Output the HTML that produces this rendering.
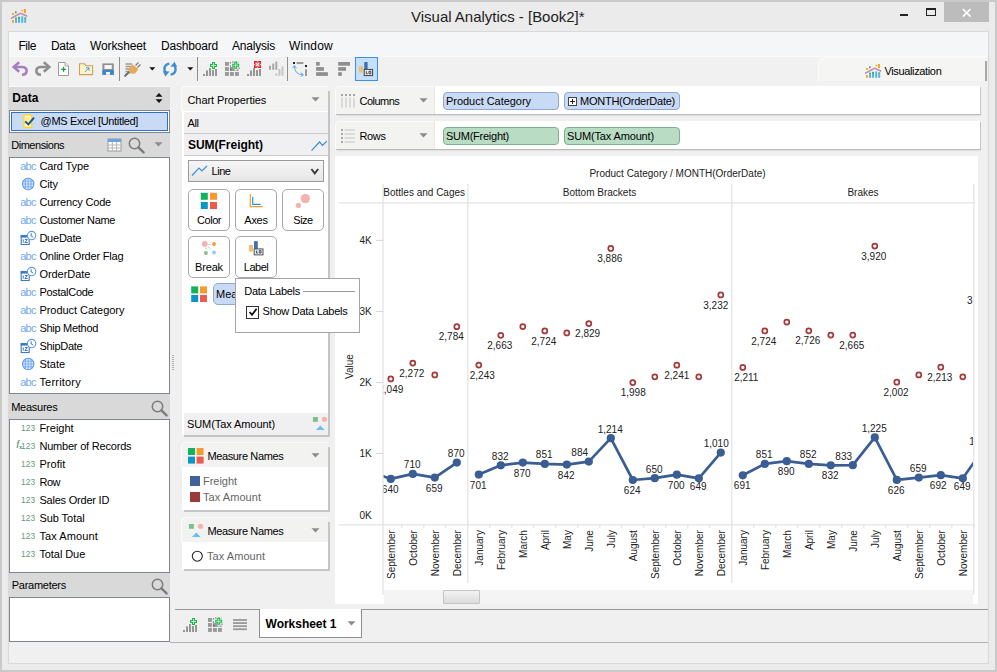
<!DOCTYPE html>
<html><head><meta charset="utf-8"><title>Visual Analytics - [Book2]*</title>
<style>
html,body{margin:0;padding:0;}
body{width:997px;height:672px;overflow:hidden;position:relative;background:#ebebeb;font-family:"Liberation Sans",sans-serif;}
#w{position:absolute;left:0;top:0;width:997px;height:672px;overflow:hidden;}
#w div,#w span.t,#w svg{position:absolute;box-sizing:border-box;}
span.t{white-space:pre;}
</style></head><body><div id="w">
<div style="left:0px;top:0px;width:997px;height:672px;background:#ebebeb;border:2px solid #c9c9c9;"></div>
<span class="t" style="left:411.05px;top:9.30px;font-size:15px;line-height:15px;color:#222;letter-spacing:-0.018px;">Visual Analytics - [Book2]*</span>
<div style="left:900px;top:14px;width:8px;height:2px;background:#222;"></div>
<div style="left:926px;top:8px;width:10px;height:8px;border:1px solid #222;border-top:2px solid #222;"></div>
<div style="left:944px;top:2px;width:45px;height:20px;background:#bcbcbc;"></div>
<svg style="left:959px;top:5px;" width="16" height="14" viewBox="0 0 16 14"><path d="M3.9 4 L11.5 11.6 M11.5 4 L3.9 11.6" stroke="#fff" stroke-width="1.6" fill="none"/></svg>
<div style="left:8px;top:31px;width:981px;height:633px;background:#f0f0f0;border:1px solid #d9d9d9;"></div>
<div style="left:9px;top:32px;width:979px;height:24px;background:#f5f6f7;"></div>
<span class="t" style="left:18.40px;top:39.84px;font-size:12px;line-height:12px;color:#000;letter-spacing:-0.434px;">File</span>
<span class="t" style="left:51.00px;top:39.84px;font-size:12px;line-height:12px;color:#000;letter-spacing:-0.337px;">Data</span>
<span class="t" style="left:90.00px;top:39.84px;font-size:12px;line-height:12px;color:#000;letter-spacing:-0.126px;">Worksheet</span>
<span class="t" style="left:161.00px;top:39.84px;font-size:12px;line-height:12px;color:#000;letter-spacing:-0.189px;">Dashboard</span>
<span class="t" style="left:232.00px;top:39.84px;font-size:12px;line-height:12px;color:#000;letter-spacing:-0.210px;">Analysis</span>
<span class="t" style="left:289.00px;top:39.84px;font-size:12px;line-height:12px;color:#000;letter-spacing:0.220px;">Window</span>
<div style="left:9px;top:56px;width:979px;height:30px;background:#f1f1f1;border-top:1px solid #fbfbfb;"></div>
<div style="left:9px;top:86px;width:161px;height:1px;background:#fbfbfb;"></div>
<div style="left:9px;top:87px;width:161px;height:23px;background:#d9d9d9;"></div>
<span class="t" style="left:12.30px;top:92.34px;font-size:12px;line-height:12px;color:#000;font-weight:bold;">Data</span>
<svg style="left:154px;top:92px;" width="10" height="12" viewBox="0 0 10 12"><path d="M1.5 4.8 L5 1 L8.5 4.8 Z M1.5 7.2 L5 11 L8.5 7.2 Z" fill="#111"/></svg>
<div style="left:9px;top:110px;width:161px;height:23px;background:#c9daf5;border:1px solid #7f8690;box-shadow:inset 0 0 0 1px #fff, inset 0 0 0 2px #2f6fd0;"></div>
<svg style="left:22px;top:113px;" width="14" height="16" viewBox="0 0 14 16"><rect x="1.8" y="1.6" width="8" height="13" rx="1.4" fill="#fdee9a" stroke="#fbd535" stroke-width="1.3"/><path d="M3.4 3.6 H8.2 M3.4 12.6 H8.2" stroke="#fffbe0" stroke-width="1"/><path d="M3.2 8.4 L6.4 11.4 L12 4.6" stroke="#1f4e8f" stroke-width="1.9" fill="none"/></svg>
<span class="t" style="left:40.60px;top:115.69px;font-size:11px;line-height:11px;color:#000;letter-spacing:-0.329px;">@MS Excel [Untitled]</span>
<div style="left:9px;top:133px;width:161px;height:24px;background:#d9d9d9;"></div>
<span class="t" style="left:11.20px;top:139.99px;font-size:11px;line-height:11px;color:#000;letter-spacing:-0.456px;">Dimensions</span>
<svg style="left:107px;top:138px;" width="15" height="14" viewBox="0 0 15 14"><rect x="1" y="1" width="13" height="12" fill="#fff" stroke="#9a9a9a"/><rect x="1" y="1" width="13" height="3" fill="#6fa3df"/><path d="M1 7 H14 M1 10 H14 M5.3 4 V13 M9.6 4 V13" stroke="#b5b5b5" stroke-width="1"/></svg>
<svg style="left:127px;top:136px;" width="20" height="20" viewBox="0 0 20 20"><circle cx="7.5" cy="7.5" r="5.2" fill="none" stroke="#7c7c7c" stroke-width="1.5"/><path d="M11.4 11.4 L16.6 16.4" stroke="#7c7c7c" stroke-width="2.4" stroke-linecap="round"/></svg>
<svg style="left:154px;top:142px;" width="9" height="5" viewBox="0 0 9 5"><path d="M0.5 0.3 H8.5 L4.5 4.6 Z" fill="#8c8c8c"/></svg>
<div style="left:9px;top:157px;width:161px;height:237px;background:#fff;border:1px solid #7f8690;"></div>
<span class="t" style="left:20.20px;top:160.59px;font-size:11px;line-height:11px;color:#6fa7ee;letter-spacing:-0.745px;">abc</span>
<span class="t" style="left:39.40px;top:161.09px;font-size:11px;line-height:11px;color:#000;letter-spacing:-0.105px;">Card Type</span>
<svg style="left:20.6px;top:176.6px;" width="14" height="14" viewBox="0 0 14 14"><circle cx="7.2" cy="7" r="5.7" fill="#e4eefc" stroke="#5b9bf0" stroke-width="1.1"/><path d="M7.2 1.3 V12.7 M4.4 2.2 V11.8 M10 2.2 V11.8 M1.5 7 H12.9 M2.4 4.2 H12 M2.4 9.8 H12" stroke="#5b9bf0" stroke-width="0.75" fill="none"/></svg>
<span class="t" style="left:39.40px;top:179.09px;font-size:11px;line-height:11px;color:#000;letter-spacing:-0.136px;">City</span>
<span class="t" style="left:20.20px;top:196.59px;font-size:11px;line-height:11px;color:#6fa7ee;letter-spacing:-0.745px;">abc</span>
<span class="t" style="left:39.40px;top:197.09px;font-size:11px;line-height:11px;color:#000;letter-spacing:-0.182px;">Currency Code</span>
<span class="t" style="left:20.20px;top:214.59px;font-size:11px;line-height:11px;color:#6fa7ee;letter-spacing:-0.745px;">abc</span>
<span class="t" style="left:39.40px;top:215.09px;font-size:11px;line-height:11px;color:#000;letter-spacing:-0.344px;">Customer Name</span>
<svg style="left:19.5px;top:230.0px;" width="17" height="16" viewBox="0 0 17 16"><rect x="1.2" y="5.5" width="8" height="9" fill="#fff" stroke="#3f79c9" stroke-width="1.1"/><rect x="0.7" y="5" width="9" height="2.6" fill="#3f79c9"/><path d="M3.2 9.4 V12.6 M4.9 9.5 H7.4 L4.9 12.5 H7.6" stroke="#3f79c9" stroke-width="1" fill="none"/><circle cx="11.6" cy="5.6" r="4.2" fill="#fff" stroke="#5b9bf0" stroke-width="1.1"/><path d="M11.2 3.2 V6 L13.2 7.2" stroke="#3f79c9" stroke-width="1" fill="none"/></svg>
<span class="t" style="left:39.40px;top:233.09px;font-size:11px;line-height:11px;color:#000;letter-spacing:-0.230px;">DueDate</span>
<span class="t" style="left:20.20px;top:250.59px;font-size:11px;line-height:11px;color:#6fa7ee;letter-spacing:-0.745px;">abc</span>
<span class="t" style="left:39.40px;top:251.09px;font-size:11px;line-height:11px;color:#000;letter-spacing:-0.207px;">Online Order Flag</span>
<svg style="left:19.5px;top:266.0px;" width="17" height="16" viewBox="0 0 17 16"><rect x="1.2" y="5.5" width="8" height="9" fill="#fff" stroke="#3f79c9" stroke-width="1.1"/><rect x="0.7" y="5" width="9" height="2.6" fill="#3f79c9"/><path d="M3.2 9.4 V12.6 M4.9 9.5 H7.4 L4.9 12.5 H7.6" stroke="#3f79c9" stroke-width="1" fill="none"/><circle cx="11.6" cy="5.6" r="4.2" fill="#fff" stroke="#5b9bf0" stroke-width="1.1"/><path d="M11.2 3.2 V6 L13.2 7.2" stroke="#3f79c9" stroke-width="1" fill="none"/></svg>
<span class="t" style="left:39.40px;top:269.09px;font-size:11px;line-height:11px;color:#000;letter-spacing:-0.039px;">OrderDate</span>
<span class="t" style="left:20.20px;top:286.59px;font-size:11px;line-height:11px;color:#6fa7ee;letter-spacing:-0.745px;">abc</span>
<span class="t" style="left:39.40px;top:287.09px;font-size:11px;line-height:11px;color:#000;letter-spacing:-0.287px;">PostalCode</span>
<span class="t" style="left:20.20px;top:304.59px;font-size:11px;line-height:11px;color:#6fa7ee;letter-spacing:-0.745px;">abc</span>
<span class="t" style="left:39.40px;top:305.09px;font-size:11px;line-height:11px;color:#000;letter-spacing:-0.037px;">Product Category</span>
<span class="t" style="left:20.20px;top:322.59px;font-size:11px;line-height:11px;color:#6fa7ee;letter-spacing:-0.745px;">abc</span>
<span class="t" style="left:39.40px;top:323.09px;font-size:11px;line-height:11px;color:#000;letter-spacing:-0.278px;">Ship Method</span>
<svg style="left:19.5px;top:338.0px;" width="17" height="16" viewBox="0 0 17 16"><rect x="1.2" y="5.5" width="8" height="9" fill="#fff" stroke="#3f79c9" stroke-width="1.1"/><rect x="0.7" y="5" width="9" height="2.6" fill="#3f79c9"/><path d="M3.2 9.4 V12.6 M4.9 9.5 H7.4 L4.9 12.5 H7.6" stroke="#3f79c9" stroke-width="1" fill="none"/><circle cx="11.6" cy="5.6" r="4.2" fill="#fff" stroke="#5b9bf0" stroke-width="1.1"/><path d="M11.2 3.2 V6 L13.2 7.2" stroke="#3f79c9" stroke-width="1" fill="none"/></svg>
<span class="t" style="left:39.40px;top:341.09px;font-size:11px;line-height:11px;color:#000;letter-spacing:-0.281px;">ShipDate</span>
<svg style="left:20.6px;top:356.59999999999997px;" width="14" height="14" viewBox="0 0 14 14"><circle cx="7.2" cy="7" r="5.7" fill="#e4eefc" stroke="#5b9bf0" stroke-width="1.1"/><path d="M7.2 1.3 V12.7 M4.4 2.2 V11.8 M10 2.2 V11.8 M1.5 7 H12.9 M2.4 4.2 H12 M2.4 9.8 H12" stroke="#5b9bf0" stroke-width="0.75" fill="none"/></svg>
<span class="t" style="left:39.40px;top:359.09px;font-size:11px;line-height:11px;color:#000;letter-spacing:0.023px;">State</span>
<span class="t" style="left:20.20px;top:376.59px;font-size:11px;line-height:11px;color:#6fa7ee;letter-spacing:-0.745px;">abc</span>
<span class="t" style="left:39.40px;top:377.09px;font-size:11px;line-height:11px;color:#000;letter-spacing:0.198px;">Territory</span>
<div style="left:9px;top:394px;width:161px;height:25px;background:#d9d9d9;"></div>
<span class="t" style="left:11.20px;top:401.99px;font-size:11px;line-height:11px;color:#000;letter-spacing:-0.262px;">Measures</span>
<svg style="left:149.5px;top:399px;" width="20" height="20" viewBox="0 0 20 20"><circle cx="7.5" cy="7.5" r="5.2" fill="none" stroke="#7c7c7c" stroke-width="1.5"/><path d="M11.4 11.4 L16.6 16.4" stroke="#7c7c7c" stroke-width="2.4" stroke-linecap="round"/></svg>
<div style="left:9px;top:419px;width:161px;height:154px;background:#fff;border:1px solid #7f8690;"></div>
<span class="t" style="left:21.10px;top:424.17px;font-size:8.3px;line-height:8.3px;color:#5f9a7e;letter-spacing:0.051px;">123</span>
<span class="t" style="left:39.40px;top:423.09px;font-size:11px;line-height:11px;color:#000;">Freight</span>
<span class="t" style="left:21.10px;top:442.17px;font-size:8.3px;line-height:8.3px;color:#5f9a7e;letter-spacing:0.051px;">123</span>
<span class="t" style="left:39.40px;top:441.09px;font-size:11px;line-height:11px;color:#000;letter-spacing:-0.198px;">Number of Records</span>
<span class="t" style="left:21.10px;top:460.17px;font-size:8.3px;line-height:8.3px;color:#5f9a7e;letter-spacing:0.051px;">123</span>
<span class="t" style="left:39.40px;top:459.09px;font-size:11px;line-height:11px;color:#000;letter-spacing:0.071px;">Profit</span>
<span class="t" style="left:21.10px;top:478.17px;font-size:8.3px;line-height:8.3px;color:#5f9a7e;letter-spacing:0.051px;">123</span>
<span class="t" style="left:39.40px;top:477.09px;font-size:11px;line-height:11px;color:#000;letter-spacing:-0.435px;">Row</span>
<span class="t" style="left:21.10px;top:496.17px;font-size:8.3px;line-height:8.3px;color:#5f9a7e;letter-spacing:0.051px;">123</span>
<span class="t" style="left:39.40px;top:495.09px;font-size:11px;line-height:11px;color:#000;letter-spacing:-0.210px;">Sales Order ID</span>
<span class="t" style="left:21.10px;top:514.17px;font-size:8.3px;line-height:8.3px;color:#5f9a7e;letter-spacing:0.051px;">123</span>
<span class="t" style="left:39.40px;top:513.09px;font-size:11px;line-height:11px;color:#000;letter-spacing:-0.051px;">Sub Total</span>
<span class="t" style="left:21.10px;top:532.17px;font-size:8.3px;line-height:8.3px;color:#5f9a7e;letter-spacing:0.051px;">123</span>
<span class="t" style="left:39.40px;top:531.09px;font-size:11px;line-height:11px;color:#000;letter-spacing:0.093px;">Tax Amount</span>
<span class="t" style="left:21.10px;top:550.17px;font-size:8.3px;line-height:8.3px;color:#5f9a7e;letter-spacing:0.051px;">123</span>
<span class="t" style="left:39.40px;top:549.09px;font-size:11px;line-height:11px;color:#000;letter-spacing:-0.074px;">Total Due</span>
<span class="t" style="left:16.50px;top:439.35px;font-size:8.8px;line-height:8.8px;color:#5f9a7e;font-style:italic;font-weight:bold;font-family:'Liberation Serif',serif;">f</span>
<span class="t" style="left:19.00px;top:443.52px;font-size:6px;line-height:6px;color:#5f9a7e;font-weight:bold;">x</span>
<div style="left:9px;top:573px;width:161px;height:24px;background:#d9d9d9;"></div>
<span class="t" style="left:11.70px;top:579.99px;font-size:11px;line-height:11px;color:#000;letter-spacing:-0.255px;">Parameters</span>
<svg style="left:149.5px;top:577px;" width="20" height="20" viewBox="0 0 20 20"><circle cx="7.5" cy="7.5" r="5.2" fill="none" stroke="#7c7c7c" stroke-width="1.5"/><path d="M11.4 11.4 L16.6 16.4" stroke="#7c7c7c" stroke-width="2.4" stroke-linecap="round"/></svg>
<div style="left:9px;top:597px;width:161px;height:45px;background:#fff;border:1px solid #7f8690;"></div>
<div style="left:328px;top:91px;width:2px;height:346px;background:#c4c4c4;"></div>
<div style="left:182px;top:111px;width:146px;height:324px;background:#fff;"></div>
<div style="left:181px;top:86px;width:147px;height:25px;background:#f3f3f1;border-radius:5px 0 0 0;border-top:1px solid #fcfcfc;border-left:1px solid #fcfcfc;"></div>
<span class="t" style="left:187.50px;top:95.09px;font-size:11px;line-height:11px;color:#000;letter-spacing:-0.086px;">Chart Properties</span>
<svg style="left:311px;top:97px;" width="9" height="5" viewBox="0 0 9 5"><path d="M0.5 0.3 H8.5 L4.5 4.6 Z" fill="#8c8c8c"/></svg>
<div style="left:184px;top:112px;width:144px;height:22px;background:#f0f0f3;border-bottom:1px solid #cccccc;"></div>
<span class="t" style="left:187.60px;top:118.29px;font-size:11px;line-height:11px;color:#000;letter-spacing:-0.408px;">All</span>
<div style="left:184px;top:134px;width:144px;height:22px;background:#f0f0f3;border-bottom:1px solid #cccccc;"></div>
<span class="t" style="left:188.00px;top:139.14px;font-size:12px;line-height:12px;color:#000;font-weight:bold;letter-spacing:-0.027px;">SUM(Freight)</span>
<svg style="left:310px;top:137px;" width="18" height="16" viewBox="0 0 18 16"><path d="M1.5 13.6 L9.5 5 L12.5 8.4 L16.8 4.2" stroke="#3d8fd8" stroke-width="1.2" fill="none"/></svg>
<div style="left:188px;top:160px;width:136px;height:22px;border:1px solid #9a9a9a;background:linear-gradient(#f6f6f6,#e6e6e6);"></div>
<svg style="left:190px;top:162px;" width="20" height="18" viewBox="0 0 20 18"><path d="M2 13.5 L9 6 L12 9 L17 4" stroke="#3d8fd8" stroke-width="1.2" fill="none"/></svg>
<span class="t" style="left:211.50px;top:165.69px;font-size:11px;line-height:11px;color:#000;letter-spacing:-0.449px;">Line</span>
<svg style="left:309px;top:167px;" width="12" height="9" viewBox="0 0 12 9"><path d="M2.4 2 L5.8 6.4 L9.2 2" stroke="#3c3c3c" stroke-width="1.9" fill="none"/></svg>
<div style="left:188px;top:189px;width:42px;height:42px;background:#fff;border:1px solid #a9a9a9;border-radius:5px;"></div>
<svg style="left:188px;top:189px;" width="42" height="42" viewBox="0 0 42 42"><rect x="12.8" y="3.8" width="7" height="7" fill="#10b45e"/><rect x="22" y="3.8" width="7" height="7" fill="#f79b2e"/><rect x="12.8" y="13" width="7" height="7" fill="#0c96c8"/><rect x="22" y="13" width="7" height="7" fill="#ec5b4b"/></svg>
<span class="t" style="left:197.00px;top:214.99px;font-size:11px;line-height:11px;color:#000;letter-spacing:-0.457px;">Color</span>
<div style="left:235px;top:189px;width:42px;height:42px;background:#fff;border:1px solid #a9a9a9;border-radius:5px;"></div>
<svg style="left:235px;top:189px;" width="42" height="42" viewBox="0 0 42 42"><path d="M15.3 5 V17.6 H27.7" stroke="#f79b2e" stroke-width="1.2" fill="none"/><path d="M17.7 8 V15.3 H25.5" stroke="#1c9bd6" stroke-width="1.2" fill="none"/></svg>
<span class="t" style="left:244.35px;top:214.99px;font-size:11px;line-height:11px;color:#000;letter-spacing:-0.289px;">Axes</span>
<div style="left:282px;top:189px;width:42px;height:42px;background:#fff;border:1px solid #a9a9a9;border-radius:5px;"></div>
<svg style="left:282px;top:189px;" width="42" height="42" viewBox="0 0 42 42"><circle cx="23.3" cy="9.6" r="4.7" fill="#f4b4ae"/><circle cx="16.4" cy="16.4" r="2.6" fill="#f4b4ae"/></svg>
<span class="t" style="left:293.35px;top:214.99px;font-size:11px;line-height:11px;color:#000;letter-spacing:-0.525px;">Size</span>
<div style="left:188px;top:236px;width:42px;height:42px;background:#fff;border:1px solid #a9a9a9;border-radius:5px;"></div>
<svg style="left:188px;top:236px;" width="42" height="42" viewBox="0 0 42 42"><circle cx="16.8" cy="7.9" r="2.9" fill="#f4b4ae"/><circle cx="26" cy="8" r="1.9" fill="#f79b2e"/><circle cx="17.9" cy="16.9" r="2" fill="#86c486"/><circle cx="26" cy="16.5" r="2" fill="#8dcff5"/><path d="M20.5 8.5 H22.5 M20.3 10.5 L22.3 12.8 M18.2 11.5 L17.8 13.5" stroke="#aaa" stroke-width="0.7"/></svg>
<span class="t" style="left:195.05px;top:261.99px;font-size:11px;line-height:11px;color:#000;letter-spacing:-0.167px;">Break</span>
<div style="left:235px;top:236px;width:42px;height:42px;background:#fff;border:1px solid #a9a9a9;border-radius:5px;"></div>
<svg style="left:235px;top:236px;" width="42" height="42" viewBox="0 0 42 42"><rect x="13.9" y="8.9" width="4.1" height="6.8" fill="#e8c17a"/><rect x="19" y="5.2" width="3.8" height="8" fill="#3f6faf"/><rect x="19.2" y="12.9" width="8.8" height="6" fill="#e4e6ee" stroke="#555" stroke-width="1"/><path d="M21.5 14.6 V17 H23 M24.3 14.6 H26 V17 H24.3 Z" stroke="#334" stroke-width="0.8" fill="none"/></svg>
<span class="t" style="left:243.75px;top:261.99px;font-size:11px;line-height:11px;color:#000;letter-spacing:-0.482px;">Label</span>
<svg style="left:191px;top:286px;" width="17" height="17" viewBox="0 0 17 17"><rect x="0.2" y="0.4" width="7" height="7" fill="#10b45e"/><rect x="9" y="0.4" width="7" height="7" fill="#f79b2e"/><rect x="0.2" y="9" width="7" height="7" fill="#0c96c8"/><rect x="9" y="9" width="7" height="7" fill="#ec5b4b"/></svg>
<div style="left:213px;top:283px;width:112px;height:22px;background:#c9daf5;border:1px solid #8fa9d0;border-radius:5px;"></div>
<span class="t" style="left:216.00px;top:288.99px;font-size:11px;line-height:11px;color:#000;">Measure Names</span>
<div style="left:184px;top:413px;width:144px;height:21.5px;background:#f0f0f3;"></div>
<div style="left:184px;top:434.5px;width:146px;height:2.2px;background:#c4c4c4;"></div>
<span class="t" style="left:187.00px;top:418.69px;font-size:11px;line-height:11px;color:#000;letter-spacing:-0.083px;">SUM(Tax Amount)</span>
<svg style="left:312px;top:416px;" width="16" height="16" viewBox="0 0 16 16"><rect x="0.9" y="1" width="5" height="4.8" fill="#7fbf8a"/><circle cx="12.5" cy="3.3" r="2.6" fill="#f4b4ae"/><path d="M3.9 14 L8.3 9.6 L12.7 14 Z" fill="#66c0f4"/></svg>
<div style="left:328px;top:447px;width:2px;height:65px;background:#c6c6c6;"></div>
<div style="left:184px;top:510px;width:146px;height:2px;background:#c6c6c6;"></div>
<div style="left:182px;top:443px;width:146px;height:67px;background:#fff;border-radius:5px 0 0 0;"></div>
<div style="left:181px;top:442px;width:147px;height:25px;background:#f2f2f0;border-radius:5px 0 0 0;border-top:1px solid #fbfbfb;border-left:1px solid #fbfbfb;"></div>
<svg style="left:188px;top:448px;" width="17" height="17" viewBox="0 0 17 17"><rect x="0" y="0" width="7" height="7" fill="#10b45e"/><rect x="8.6" y="0" width="7" height="7" fill="#f79b2e"/><rect x="0" y="8.6" width="7" height="7" fill="#0c96c8"/><rect x="8.6" y="8.6" width="7" height="7" fill="#ec5b4b"/></svg>
<span class="t" style="left:207.40px;top:451.39px;font-size:11px;line-height:11px;color:#000;letter-spacing:-0.361px;">Measure Names</span>
<svg style="left:311px;top:452.6px;" width="9" height="5" viewBox="0 0 9 5"><path d="M0.5 0.3 H8.5 L4.5 4.6 Z" fill="#8c8c8c"/></svg>
<div style="left:190px;top:476px;width:10px;height:10px;background:#3d6398;"></div>
<span class="t" style="left:203.00px;top:475.69px;font-size:11px;line-height:11px;color:#666;letter-spacing:-0.033px;">Freight</span>
<div style="left:190px;top:492px;width:10px;height:10px;background:#9c3a3a;"></div>
<span class="t" style="left:203.00px;top:491.69px;font-size:11px;line-height:11px;color:#666;letter-spacing:0.053px;">Tax Amount</span>
<div style="left:328px;top:522px;width:2px;height:48.5px;background:#c6c6c6;"></div>
<div style="left:184px;top:568.5px;width:146px;height:2px;background:#c6c6c6;"></div>
<div style="left:182px;top:518px;width:146px;height:50.5px;background:#fff;border-radius:5px 0 0 0;"></div>
<div style="left:181px;top:517px;width:147px;height:25px;background:#f2f2f0;border-radius:5px 0 0 0;border-top:1px solid #fbfbfb;border-left:1px solid #fbfbfb;"></div>
<svg style="left:188px;top:523px;" width="16" height="16" viewBox="0 0 16 16"><rect x="0.9" y="1" width="5" height="4.8" fill="#7fbf8a"/><circle cx="12.5" cy="3.3" r="2.6" fill="#f4b4ae"/><path d="M3.9 14 L8.3 9.6 L12.7 14 Z" fill="#66c0f4"/></svg>
<span class="t" style="left:207.40px;top:526.39px;font-size:11px;line-height:11px;color:#000;letter-spacing:-0.361px;">Measure Names</span>
<svg style="left:311px;top:527.6px;" width="9" height="5" viewBox="0 0 9 5"><path d="M0.5 0.3 H8.5 L4.5 4.6 Z" fill="#8c8c8c"/></svg>
<svg style="left:191px;top:550px;" width="13" height="13" viewBox="0 0 13 13"><circle cx="6.3" cy="6.2" r="5" fill="#fff" stroke="#222" stroke-width="1.1"/></svg>
<span class="t" style="left:207.00px;top:550.69px;font-size:11px;line-height:11px;color:#666;letter-spacing:0.053px;">Tax Amount</span>
<svg style="left:12px;top:61px;" width="18" height="16" viewBox="0 0 18 16"><path d="M7.2 1.2 L1.6 6 L7.2 10.8" stroke="#a57fc4" stroke-width="2.6" fill="none" stroke-linejoin="miter"/><path d="M3 6 H10.5 Q14.6 6.3 14.6 10 Q14.6 13.6 10 13.8" stroke="#a57fc4" stroke-width="2.6" fill="none"/></svg>
<svg style="left:33px;top:61px;" width="18" height="16" viewBox="0 0 18 16"><path d="M10.8 1.2 L16.4 6 L10.8 10.8" stroke="#8e8e8e" stroke-width="2.6" fill="none"/><path d="M15 6 H7.5 Q3.4 6.3 3.4 10 Q3.4 13.6 8 13.8" stroke="#8e8e8e" stroke-width="2.6" fill="none"/></svg>
<svg style="left:57px;top:61px;" width="13" height="16" viewBox="0 0 13 16"><path d="M1.5 1.5 H8 L11.5 5 V14.5 H1.5 Z" fill="#fff" stroke="#9a9a9a" stroke-width="1"/><path d="M8 1.5 V5 H11.5" fill="#e8e8e8" stroke="#9a9a9a" stroke-width="0.8"/><path d="M6.6 5.8 V10.8 M4.1 8.3 H9.1" stroke="#1d9a3c" stroke-width="1.3"/></svg>
<svg style="left:78px;top:62px;" width="16" height="14" viewBox="0 0 16 14"><path d="M1.5 1.8 H6.5 L8.2 3.8 H14.6 V12.6 H1.5 Z" fill="#fdf4cc" stroke="#c9a05e" stroke-width="1.1"/><path d="M6.8 10 L10.8 6 M8 5.8 H11 V8.8" stroke="#3f8fd0" stroke-width="0.9" fill="none"/></svg>
<svg style="left:101px;top:62px;" width="14" height="14" viewBox="0 0 14 14"><rect x="1.4" y="1.4" width="11.4" height="11.4" fill="#8e8e8e"/><rect x="3.4" y="3" width="7.4" height="4" fill="#f4f4f4"/><rect x="1.4" y="8" width="11.4" height="4.8" fill="#3a87cf"/><rect x="5" y="10" width="4" height="2.8" fill="#f4f4f4"/></svg>
<div style="left:119px;top:57px;width:1px;height:24px;background:#8f8f8f;"></div>
<svg style="left:123px;top:61px;" width="18" height="17" viewBox="0 0 18 17"><path d="M2.5 3 H9 M2.5 5.5 H8 M2.5 8 H7 M2.5 10.5 H6 M2.5 13 H5" stroke="#9a9a9a" stroke-width="1.4"/><path d="M1.5 15.5 L7 10" stroke="#707070" stroke-width="1.8"/><path d="M12.5 4.5 L15.5 1.5 M14.5 6.5 L17.5 3.5" stroke="#777" stroke-width="1.1"/><path d="M6.2 7.6 L9.2 3.2 L15.4 8 L12.4 12.2 Q9 13.8 6.6 11.6 Q5.2 9.6 6.2 7.6 Z" fill="#e9a857"/><circle cx="6.4" cy="11.9" r="0.7" fill="#2bb24a"/></svg>
<svg style="left:148.8px;top:67.4px;" width="7" height="4" viewBox="0 0 7 4"><path d="M0.3 0.2 H6.3 L3.3 3.6 Z" fill="#111"/></svg>
<svg style="left:161px;top:61px;" width="18" height="16" viewBox="0 0 18 16"><path d="M8.4 2.6 Q3.4 3.4 3.4 8.2 Q3.6 10.6 5.2 12" stroke="#3f8fd0" stroke-width="2.4" fill="none"/><path d="M1.8 10.2 L8.6 10.6 L4.4 15.4 Z" fill="#3f8fd0"/><path d="M9.6 13.6 Q14.6 12.8 14.6 8 Q14.4 5.6 12.8 4.2" stroke="#3f8fd0" stroke-width="2.4" fill="none"/><path d="M16.2 6 L9.4 5.6 L13.6 0.8 Z" fill="#3f8fd0"/></svg>
<svg style="left:186.8px;top:67.4px;" width="7" height="4" viewBox="0 0 7 4"><path d="M0.3 0.2 H6.3 L3.3 3.6 Z" fill="#111"/></svg>
<div style="left:197px;top:57px;width:1px;height:24px;background:#8f8f8f;"></div>
<svg style="left:202px;top:60px;" width="18" height="17" viewBox="202 60 18 17"><rect x="203" y="74" width="2" height="2" fill="#969696"/><rect x="206" y="70.4" width="2" height="5.6" fill="#969696"/><rect x="209" y="68" width="2" height="8" fill="#969696"/><rect x="212" y="70" width="2" height="6" fill="#969696"/><rect x="215" y="69" width="2" height="7" fill="#969696"/><path d="M212 62 h3 v2 h2 v3 h-2 v2 h-3 v-2 h-2 v-3 h2 Z" fill="#1bb851"/><path d="M213 63 h1 v2 h2 v1 h-2 v2 h-1 v-2 h-2 v-1 h2 Z" fill="#b9efb2"/></svg>
<svg style="left:224px;top:60.2px;" width="18" height="18" viewBox="224 60.2 18 18"><rect x="225" y="62.2" width="3.9" height="3.9" fill="#999"/><rect x="225" y="67.2" width="3.9" height="3.9" fill="#999"/><rect x="225" y="72.2" width="3.9" height="3.9" fill="#999"/><rect x="230" y="62.2" width="3.9" height="3.9" fill="#999"/><rect x="230" y="67.2" width="3.9" height="3.9" fill="#999"/><rect x="230" y="72.2" width="3.9" height="3.9" fill="#999"/><rect x="235" y="62.2" width="3.9" height="3.9" fill="#999"/><rect x="235" y="67.2" width="3.9" height="3.9" fill="#999"/><rect x="235" y="72.2" width="3.9" height="3.9" fill="#999"/><rect x="229.6" y="61.2" width="10" height="5.4" fill="#f1f1f1"/><rect x="234" y="66.2" width="5.4" height="4.6" fill="#f1f1f1"/><path d="M230.4 70.2 V62.2 H239 M230.4 70.2 H239 V67.2" stroke="#666" stroke-width="0.9" stroke-dasharray="1.6 1.6" fill="none"/><path d="M234.2 62.0 h3 v2 h2 v3 h-2 v2 h-3 v-2 h-2 v-3 h2 Z" fill="#1bb851"/><path d="M235.2 63.0 h1 v2 h2 v1 h-2 v2 h-1 v-2 h-2 v-1 h2 Z" fill="#b9efb2"/></svg>
<svg style="left:246px;top:60px;" width="17" height="17" viewBox="246 60 17 17"><rect x="247" y="74" width="2" height="2" fill="#969696"/><rect x="250" y="70.4" width="2" height="5.6" fill="#969696"/><rect x="253" y="68" width="2" height="8" fill="#969696"/><rect x="256" y="70" width="2" height="6" fill="#969696"/><rect x="259" y="69" width="2" height="7" fill="#969696"/><rect x="254" y="61" width="7" height="7" fill="#e41e26"/><path d="M255.6 62.6 L259.4 66.4 M259.4 62.6 L255.6 66.4" stroke="#fff" stroke-width="1.3"/><path d="M254 64.5 l1.2 -1 v2 Z M261 64.5 l-1.2 -1 v2 Z M257.5 61 l-1 1.2 h2 Z M257.5 68 l-1 -1.2 h2 Z" fill="#f1f1f1"/></svg>
<svg style="left:268px;top:61px;" width="18" height="16" viewBox="0 0 18 16"><rect x="1" y="4.8" width="2" height="4" fill="#a8a8a8"/><rect x="4.2" y="2.6" width="2" height="6.2" fill="#a8a8a8"/><rect x="7.3" y="0.6" width="2" height="8.2" fill="#a8a8a8"/><rect x="7.3" y="12.4" width="2" height="2.4" fill="#c6c6c6"/><rect x="10.4" y="8" width="2" height="6.8" fill="#c6c6c6"/><rect x="13.5" y="5.4" width="2" height="9.4" fill="#c6c6c6"/></svg>
<div style="left:287px;top:57px;width:1px;height:24px;background:#8f8f8f;"></div>
<svg style="left:292px;top:61px;" width="18" height="16" viewBox="292 61 18 16"><rect x="293" y="62" width="2" height="2" fill="#222"/><rect x="305" y="65" width="2" height="2" fill="#222"/><rect x="296.6" y="62" width="6.8" height="2" fill="#9a9a9a"/><rect x="305" y="69.4" width="2" height="6.6" fill="#9a9a9a"/><path d="M294.4 66 Q294.6 74.6 303 74.8" stroke="#5aaee6" stroke-width="1" fill="none"/><path d="M292.6 68.2 L294.4 65.6 L296.4 68.2 M300.8 72.6 L303.4 74.8 L300.8 76.6" stroke="#5aaee6" stroke-width="1" fill="none"/></svg>
<svg style="left:315px;top:61px;" width="14" height="16" viewBox="0 0 14 16"><rect x="1.1" y="1" width="3.6" height="3.7" fill="#8e8e8e"/><rect x="1.1" y="6.1" width="7.8" height="3.7" fill="#8e8e8e"/><rect x="1.1" y="11.2" width="11.8" height="3.7" fill="#8e8e8e"/></svg>
<svg style="left:337px;top:61px;" width="14" height="16" viewBox="0 0 14 16"><rect x="1.2" y="1" width="11.8" height="3.7" fill="#8e8e8e"/><rect x="1.2" y="6.1" width="7.8" height="3.7" fill="#8e8e8e"/><rect x="1.2" y="11.2" width="3.6" height="3.7" fill="#8e8e8e"/></svg>
<div style="left:355px;top:57px;width:23px;height:24px;background:#c5e0fb;border:1.5px solid #3b8ef0;"></div>
<svg style="left:355px;top:57px;" width="23" height="24" viewBox="0 0 23 24"><rect x="3.9" y="9.2" width="4.2" height="6.4" fill="#e8c17a"/><rect x="9.3" y="5" width="3.3" height="7" fill="#3f6faf"/><rect x="9.2" y="12.4" width="8.4" height="6.2" fill="#e8eaf2" stroke="#444" stroke-width="1"/><path d="M11.3 14.2 V16.8 H12.8 M14 14.2 H15.8 V16.8 H14 Z" stroke="#223" stroke-width="0.8" fill="none"/></svg>
<div style="left:336px;top:86px;width:644px;height:28px;background:#fff;border-radius:5px 0 0 0;box-shadow:0 1px 0 0 #bcbcbc, 1px 1px 0 0 #c8c8c8, 1px 2px 1px 0 #dedede;"></div>
<div style="left:335px;top:86px;width:100px;height:28px;background:#f3f3f1;border-radius:5px 0 0 0;border-right:1px solid #ece8d2;border-top:1px solid #fcfcfc;border-left:1px solid #fcfcfc;"></div>
<svg style="left:340px;top:93px;" width="17" height="16" viewBox="0 0 17 16"><rect x="1" y="1" width="2" height="2" fill="#a6a6a6"/><rect x="1" y="4.6" width="2" height="10" fill="#dadada"/><rect x="5" y="1" width="2" height="2" fill="#a6a6a6"/><rect x="5" y="4.6" width="2" height="10" fill="#dadada"/><rect x="9" y="1" width="2" height="2" fill="#a6a6a6"/><rect x="9" y="4.6" width="2" height="10" fill="#dadada"/><rect x="13" y="1" width="2" height="2" fill="#a6a6a6"/><rect x="13" y="4.6" width="2" height="10" fill="#dadada"/></svg>
<span class="t" style="left:359.50px;top:96.09px;font-size:11px;line-height:11px;color:#000;letter-spacing:-0.529px;">Columns</span>
<svg style="left:418.6px;top:97.8px;" width="9" height="5" viewBox="0 0 9 5"><path d="M0.5 0.3 H8.5 L4.5 4.6 Z" fill="#8c8c8c"/></svg>
<div style="left:336px;top:121px;width:644px;height:28px;background:#fff;border-radius:5px 0 0 0;box-shadow:0 1px 0 0 #bcbcbc, 1px 1px 0 0 #c8c8c8, 1px 2px 1px 0 #dedede;"></div>
<div style="left:335px;top:121px;width:100px;height:28px;background:#f3f3f1;border-radius:5px 0 0 0;border-right:1px solid #ece8d2;border-top:1px solid #fcfcfc;border-left:1px solid #fcfcfc;"></div>
<svg style="left:340px;top:128px;" width="17" height="16" viewBox="0 0 17 16"><rect x="1" y="1" width="2" height="2" fill="#a8a8a8"/><rect x="4.6" y="1" width="10.4" height="2" fill="#dcdcdc"/><rect x="1" y="5" width="2" height="2" fill="#a8a8a8"/><rect x="4.6" y="5" width="10.4" height="2" fill="#dcdcdc"/><rect x="1" y="9" width="2" height="2" fill="#a8a8a8"/><rect x="4.6" y="9" width="10.4" height="2" fill="#dcdcdc"/><rect x="1" y="13" width="2" height="2" fill="#a8a8a8"/><rect x="4.6" y="13" width="10.4" height="2" fill="#dcdcdc"/></svg>
<span class="t" style="left:359.50px;top:131.29px;font-size:11px;line-height:11px;color:#000;letter-spacing:-0.376px;">Rows</span>
<svg style="left:418.6px;top:132.8px;" width="9" height="5" viewBox="0 0 9 5"><path d="M0.5 0.3 H8.5 L4.5 4.6 Z" fill="#8c8c8c"/></svg>
<div style="left:443px;top:92px;width:116px;height:18px;background:#c9daf5;border:1px solid #8ea9d3;border-radius:4px;"></div>
<span class="t" style="left:446.00px;top:95.69px;font-size:11px;line-height:11px;color:#000;letter-spacing:-0.037px;">Product Category</span>
<div style="left:564px;top:92px;width:116px;height:18px;background:#c9daf5;border:1px solid #8ea9d3;border-radius:4px;"></div>
<span class="t" style="left:580.00px;top:95.69px;font-size:11px;line-height:11px;color:#000;letter-spacing:-0.250px;">MONTH(OrderDate)</span>
<div style="left:568px;top:96.5px;width:9px;height:9px;background:#fff;border:1px solid #444;"></div>
<div style="left:570px;top:100.5px;width:5px;height:1px;background:#222;"></div>
<div style="left:572px;top:98.5px;width:1px;height:5px;background:#222;"></div>
<div style="left:443px;top:127px;width:116px;height:18px;background:#b9dcc4;border:1px solid #7fae90;border-radius:4px;"></div>
<span class="t" style="left:446.00px;top:130.69px;font-size:11px;line-height:11px;color:#000;letter-spacing:-0.250px;">SUM(Freight)</span>
<div style="left:564px;top:127px;width:116px;height:18px;background:#b9dcc4;border:1px solid #7fae90;border-radius:4px;"></div>
<span class="t" style="left:567.00px;top:130.69px;font-size:11px;line-height:11px;color:#000;letter-spacing:-0.150px;">SUM(Tax Amount)</span>
<div style="left:818px;top:57px;width:169px;height:24px;background:#f5f5f3;border:1px solid #fbfbfb;border-right:none;border-bottom:none;border-radius:7px 0 0 0;"></div>
<div style="left:985px;top:61px;width:1.5px;height:20px;background:#a8a8a8;"></div>
<svg style="left:865px;top:63px;" width="17" height="16" viewBox="0 0 17 16"><rect x="1.0" y="5.0" width="2.0" height="1.8" fill="#f6a723"/><rect x="10.4" y="1.8" width="1.8" height="1.4" fill="#f6a723"/><rect x="13.0" y="1.0" width="2.0" height="4.0" fill="#f6a723"/><rect x="1.0" y="12.0" width="2.0" height="2.8" fill="#f6a723"/><rect x="4.0" y="3.2" width="1.6" height="2.2" fill="#55a868"/><rect x="4.0" y="9.6" width="2.0" height="2.0" fill="#55a868"/><rect x="7.0" y="8.8" width="2.0" height="2.2" fill="#55a868"/><rect x="13.2" y="9.4" width="2.0" height="2.2" fill="#55a868"/><rect x="4.0" y="11.6" width="2.0" height="3.2" fill="#4db6f0"/><rect x="7.0" y="11.0" width="2.0" height="3.8" fill="#4db6f0"/><rect x="10.2" y="8.4" width="2.0" height="6.4" fill="#4db6f0"/><rect x="13.2" y="11.6" width="2.0" height="3.2" fill="#4db6f0"/><path d="M0 10 L9.5 4.9 L16.2 7.8" stroke="#e8708c" stroke-width="0.9" fill="none"/><path d="M0 10.8 L9.5 5.7 L16.2 8.6" stroke="#8a7fd0" stroke-width="0.8" fill="none"/></svg>
<svg style="left:11px;top:8px;" width="17" height="16" viewBox="0 0 17 16"><rect x="1.0" y="5.0" width="2.0" height="1.8" fill="#f6a723"/><rect x="10.4" y="1.8" width="1.8" height="1.4" fill="#f6a723"/><rect x="13.0" y="1.0" width="2.0" height="4.0" fill="#f6a723"/><rect x="1.0" y="12.0" width="2.0" height="2.8" fill="#f6a723"/><rect x="4.0" y="3.2" width="1.6" height="2.2" fill="#55a868"/><rect x="4.0" y="9.6" width="2.0" height="2.0" fill="#55a868"/><rect x="7.0" y="8.8" width="2.0" height="2.2" fill="#55a868"/><rect x="13.2" y="9.4" width="2.0" height="2.2" fill="#55a868"/><rect x="4.0" y="11.6" width="2.0" height="3.2" fill="#4db6f0"/><rect x="7.0" y="11.0" width="2.0" height="3.8" fill="#4db6f0"/><rect x="10.2" y="8.4" width="2.0" height="6.4" fill="#4db6f0"/><rect x="13.2" y="11.6" width="2.0" height="3.2" fill="#4db6f0"/><path d="M0 10 L9.5 4.9 L16.2 7.8" stroke="#e8708c" stroke-width="0.9" fill="none"/><path d="M0 10.8 L9.5 5.7 L16.2 8.6" stroke="#8a7fd0" stroke-width="0.8" fill="none"/></svg>
<span class="t" style="left:884.40px;top:65.69px;font-size:11px;line-height:11px;color:#000;letter-spacing:-0.350px;">Visualization</span>
<div style="left:335px;top:156px;width:643px;height:448px;background:#fff;"></div>
<div style="left:384px;top:590px;width:589px;height:14px;background:#f4f4f4;"></div>
<div style="left:443px;top:590px;width:37px;height:14px;background:linear-gradient(#f2f2f2,#dcdcdc);border:1px solid #c4c4c4;border-radius:1px;"></div>
<svg style="left:0px;top:0px;font-family:'Liberation Sans',sans-serif;" width="997" height="672" viewBox="0 0 997 672"><text x="677.5" y="177.0" text-anchor="middle" font-size="10" fill="#222" >Product Category / MONTH(OrderDate)</text><line x1="383" y1="184" x2="383" y2="595" stroke="#e4e4e4" stroke-width="1.3"/><line x1="467.8" y1="184" x2="467.8" y2="583" stroke="#e4e4e4" stroke-width="1.3"/><line x1="731.8" y1="184" x2="731.8" y2="583" stroke="#e4e4e4" stroke-width="1.3"/><line x1="973.8" y1="184" x2="973.8" y2="595" stroke="#e4e4e4" stroke-width="1.3"/><line x1="339" y1="202.8" x2="975" y2="202.8" stroke="#e4e4e4" stroke-width="1.3"/><line x1="339" y1="524.8" x2="975" y2="524.8" stroke="#e4e4e4" stroke-width="1.3"/><text x="424.2" y="196.0" text-anchor="middle" font-size="10" fill="#222" >Bottles and Cages</text><text x="599.5" y="196.0" text-anchor="middle" font-size="10" fill="#222" >Bottom Brackets</text><text x="863.0" y="196.0" text-anchor="middle" font-size="10" fill="#222" >Brakes</text><line x1="376" y1="240.4" x2="383" y2="240.4" stroke="#d4d4d4" stroke-width="1"/><text x="371.8" y="244.0" text-anchor="end" font-size="10" fill="#222" >4K</text><line x1="376" y1="311.4" x2="383" y2="311.4" stroke="#d4d4d4" stroke-width="1"/><text x="371.8" y="315.0" text-anchor="end" font-size="10" fill="#222" >3K</text><line x1="376" y1="382.4" x2="383" y2="382.4" stroke="#d4d4d4" stroke-width="1"/><text x="371.8" y="386.0" text-anchor="end" font-size="10" fill="#222" >2K</text><line x1="376" y1="453.4" x2="383" y2="453.4" stroke="#d4d4d4" stroke-width="1"/><text x="371.8" y="457.0" text-anchor="end" font-size="10" fill="#222" >1K</text><text x="371.8" y="519.3" text-anchor="end" font-size="10" fill="#222" >0K</text><text transform="translate(352.5,366.5) rotate(-90)" text-anchor="middle" font-size="10" fill="#222">Value</text><text transform="translate(395.0,530.1) rotate(-90)" text-anchor="end" font-size="10" fill="#222">September</text><text transform="translate(417.0,530.1) rotate(-90)" text-anchor="end" font-size="10" fill="#222">October</text><text transform="translate(439.0,530.1) rotate(-90)" text-anchor="end" font-size="10" fill="#222">November</text><text transform="translate(461.0,530.1) rotate(-90)" text-anchor="end" font-size="10" fill="#222">December</text><text transform="translate(483.0,530.1) rotate(-90)" text-anchor="end" font-size="10" fill="#222">January</text><text transform="translate(505.0,530.1) rotate(-90)" text-anchor="end" font-size="10" fill="#222">February</text><text transform="translate(527.0,530.1) rotate(-90)" text-anchor="end" font-size="10" fill="#222">March</text><text transform="translate(549.0,530.1) rotate(-90)" text-anchor="end" font-size="10" fill="#222">April</text><text transform="translate(571.0,530.1) rotate(-90)" text-anchor="end" font-size="10" fill="#222">May</text><text transform="translate(593.0,530.1) rotate(-90)" text-anchor="end" font-size="10" fill="#222">June</text><text transform="translate(615.0,530.1) rotate(-90)" text-anchor="end" font-size="10" fill="#222">July</text><text transform="translate(637.0,530.1) rotate(-90)" text-anchor="end" font-size="10" fill="#222">August</text><text transform="translate(659.0,530.1) rotate(-90)" text-anchor="end" font-size="10" fill="#222">September</text><text transform="translate(681.0,530.1) rotate(-90)" text-anchor="end" font-size="10" fill="#222">October</text><text transform="translate(703.0,530.1) rotate(-90)" text-anchor="end" font-size="10" fill="#222">November</text><text transform="translate(725.0,530.1) rotate(-90)" text-anchor="end" font-size="10" fill="#222">December</text><text transform="translate(747.0,530.1) rotate(-90)" text-anchor="end" font-size="10" fill="#222">January</text><text transform="translate(769.0,530.1) rotate(-90)" text-anchor="end" font-size="10" fill="#222">February</text><text transform="translate(791.0,530.1) rotate(-90)" text-anchor="end" font-size="10" fill="#222">March</text><text transform="translate(813.0,530.1) rotate(-90)" text-anchor="end" font-size="10" fill="#222">April</text><text transform="translate(835.0,530.1) rotate(-90)" text-anchor="end" font-size="10" fill="#222">May</text><text transform="translate(857.0,530.1) rotate(-90)" text-anchor="end" font-size="10" fill="#222">June</text><text transform="translate(879.0,530.1) rotate(-90)" text-anchor="end" font-size="10" fill="#222">July</text><text transform="translate(901.0,530.1) rotate(-90)" text-anchor="end" font-size="10" fill="#222">August</text><text transform="translate(923.0,530.1) rotate(-90)" text-anchor="end" font-size="10" fill="#222">September</text><text transform="translate(945.0,530.1) rotate(-90)" text-anchor="end" font-size="10" fill="#222">October</text><text transform="translate(967.0,530.1) rotate(-90)" text-anchor="end" font-size="10" fill="#222">November</text><line x1="401.8" y1="524.5" x2="401.8" y2="528" stroke="#dcdcdc" stroke-width="1"/><line x1="423.8" y1="524.5" x2="423.8" y2="528" stroke="#dcdcdc" stroke-width="1"/><line x1="445.8" y1="524.5" x2="445.8" y2="528" stroke="#dcdcdc" stroke-width="1"/><line x1="489.8" y1="524.5" x2="489.8" y2="528" stroke="#dcdcdc" stroke-width="1"/><line x1="511.8" y1="524.5" x2="511.8" y2="528" stroke="#dcdcdc" stroke-width="1"/><line x1="533.8" y1="524.5" x2="533.8" y2="528" stroke="#dcdcdc" stroke-width="1"/><line x1="555.8" y1="524.5" x2="555.8" y2="528" stroke="#dcdcdc" stroke-width="1"/><line x1="577.8" y1="524.5" x2="577.8" y2="528" stroke="#dcdcdc" stroke-width="1"/><line x1="599.8" y1="524.5" x2="599.8" y2="528" stroke="#dcdcdc" stroke-width="1"/><line x1="621.8" y1="524.5" x2="621.8" y2="528" stroke="#dcdcdc" stroke-width="1"/><line x1="643.8" y1="524.5" x2="643.8" y2="528" stroke="#dcdcdc" stroke-width="1"/><line x1="665.8" y1="524.5" x2="665.8" y2="528" stroke="#dcdcdc" stroke-width="1"/><line x1="687.8" y1="524.5" x2="687.8" y2="528" stroke="#dcdcdc" stroke-width="1"/><line x1="709.8" y1="524.5" x2="709.8" y2="528" stroke="#dcdcdc" stroke-width="1"/><line x1="753.8" y1="524.5" x2="753.8" y2="528" stroke="#dcdcdc" stroke-width="1"/><line x1="775.8" y1="524.5" x2="775.8" y2="528" stroke="#dcdcdc" stroke-width="1"/><line x1="797.8" y1="524.5" x2="797.8" y2="528" stroke="#dcdcdc" stroke-width="1"/><line x1="819.8" y1="524.5" x2="819.8" y2="528" stroke="#dcdcdc" stroke-width="1"/><line x1="841.8" y1="524.5" x2="841.8" y2="528" stroke="#dcdcdc" stroke-width="1"/><line x1="863.8" y1="524.5" x2="863.8" y2="528" stroke="#dcdcdc" stroke-width="1"/><line x1="885.8" y1="524.5" x2="885.8" y2="528" stroke="#dcdcdc" stroke-width="1"/><line x1="907.8" y1="524.5" x2="907.8" y2="528" stroke="#dcdcdc" stroke-width="1"/><line x1="929.8" y1="524.5" x2="929.8" y2="528" stroke="#dcdcdc" stroke-width="1"/><line x1="951.8" y1="524.5" x2="951.8" y2="528" stroke="#dcdcdc" stroke-width="1"/><line x1="973.8" y1="524.5" x2="973.8" y2="528" stroke="#dcdcdc" stroke-width="1"/><clipPath id="pc"><rect x="383.6" y="203" width="589.4" height="322"/></clipPath><g clip-path="url(#pc)"><polyline points="368.8,471.1 390.8,478.9 412.8,473.9 434.8,477.6 456.8,462.6" fill="none" stroke="#3a5d93" stroke-width="2.7" stroke-linejoin="round"/><polyline points="478.8,474.6 500.8,465.3 522.8,462.6 544.8,463.9 566.8,464.6 588.8,461.6 610.8,438.2 632.8,480.0 654.8,478.2 676.8,474.7 698.8,478.3 720.8,452.6" fill="none" stroke="#3a5d93" stroke-width="2.7" stroke-linejoin="round"/><polyline points="742.8,475.3 764.8,463.9 786.8,461.2 808.8,463.9 830.8,465.3 852.8,465.2 874.8,437.4 896.8,479.9 918.8,477.6 940.8,475.2 962.8,478.3 984.8,446.9" fill="none" stroke="#3a5d93" stroke-width="2.7" stroke-linejoin="round"/><circle cx="390.8" cy="478.9" r="4.1" fill="#3a5d93"/><circle cx="412.8" cy="473.9" r="4.1" fill="#3a5d93"/><circle cx="434.8" cy="477.6" r="4.1" fill="#3a5d93"/><circle cx="456.8" cy="462.6" r="4.1" fill="#3a5d93"/><circle cx="478.8" cy="474.6" r="4.1" fill="#3a5d93"/><circle cx="500.8" cy="465.3" r="4.1" fill="#3a5d93"/><circle cx="522.8" cy="462.6" r="4.1" fill="#3a5d93"/><circle cx="544.8" cy="463.9" r="4.1" fill="#3a5d93"/><circle cx="566.8" cy="464.6" r="4.1" fill="#3a5d93"/><circle cx="588.8" cy="461.6" r="4.1" fill="#3a5d93"/><circle cx="610.8" cy="438.2" r="4.1" fill="#3a5d93"/><circle cx="632.8" cy="480.0" r="4.1" fill="#3a5d93"/><circle cx="654.8" cy="478.2" r="4.1" fill="#3a5d93"/><circle cx="676.8" cy="474.7" r="4.1" fill="#3a5d93"/><circle cx="698.8" cy="478.3" r="4.1" fill="#3a5d93"/><circle cx="720.8" cy="452.6" r="4.1" fill="#3a5d93"/><circle cx="742.8" cy="475.3" r="4.1" fill="#3a5d93"/><circle cx="764.8" cy="463.9" r="4.1" fill="#3a5d93"/><circle cx="786.8" cy="461.2" r="4.1" fill="#3a5d93"/><circle cx="808.8" cy="463.9" r="4.1" fill="#3a5d93"/><circle cx="830.8" cy="465.3" r="4.1" fill="#3a5d93"/><circle cx="852.8" cy="465.2" r="4.1" fill="#3a5d93"/><circle cx="874.8" cy="437.4" r="4.1" fill="#3a5d93"/><circle cx="896.8" cy="479.9" r="4.1" fill="#3a5d93"/><circle cx="918.8" cy="477.6" r="4.1" fill="#3a5d93"/><circle cx="940.8" cy="475.2" r="4.1" fill="#3a5d93"/><circle cx="962.8" cy="478.3" r="4.1" fill="#3a5d93"/><circle cx="390.8" cy="378.9" r="2.5" fill="#fff" stroke="#a33b3b" stroke-width="1.75"/><circle cx="412.8" cy="363.0" r="2.5" fill="#fff" stroke="#a33b3b" stroke-width="1.75"/><circle cx="434.8" cy="374.9" r="2.5" fill="#fff" stroke="#a33b3b" stroke-width="1.75"/><circle cx="456.8" cy="326.7" r="2.5" fill="#fff" stroke="#a33b3b" stroke-width="1.75"/><circle cx="478.8" cy="365.1" r="2.5" fill="#fff" stroke="#a33b3b" stroke-width="1.75"/><circle cx="500.8" cy="335.3" r="2.5" fill="#fff" stroke="#a33b3b" stroke-width="1.75"/><circle cx="522.8" cy="326.5" r="2.5" fill="#fff" stroke="#a33b3b" stroke-width="1.75"/><circle cx="544.8" cy="330.9" r="2.5" fill="#fff" stroke="#a33b3b" stroke-width="1.75"/><circle cx="566.8" cy="332.9" r="2.5" fill="#fff" stroke="#a33b3b" stroke-width="1.75"/><circle cx="588.8" cy="323.5" r="2.5" fill="#fff" stroke="#a33b3b" stroke-width="1.75"/><circle cx="610.8" cy="248.4" r="2.5" fill="#fff" stroke="#a33b3b" stroke-width="1.75"/><circle cx="632.8" cy="382.5" r="2.5" fill="#fff" stroke="#a33b3b" stroke-width="1.75"/><circle cx="654.8" cy="376.8" r="2.5" fill="#fff" stroke="#a33b3b" stroke-width="1.75"/><circle cx="676.8" cy="365.2" r="2.5" fill="#fff" stroke="#a33b3b" stroke-width="1.75"/><circle cx="698.8" cy="376.8" r="2.5" fill="#fff" stroke="#a33b3b" stroke-width="1.75"/><circle cx="720.8" cy="294.9" r="2.5" fill="#fff" stroke="#a33b3b" stroke-width="1.75"/><circle cx="742.8" cy="367.4" r="2.5" fill="#fff" stroke="#a33b3b" stroke-width="1.75"/><circle cx="764.8" cy="330.9" r="2.5" fill="#fff" stroke="#a33b3b" stroke-width="1.75"/><circle cx="786.8" cy="322.0" r="2.5" fill="#fff" stroke="#a33b3b" stroke-width="1.75"/><circle cx="808.8" cy="330.8" r="2.5" fill="#fff" stroke="#a33b3b" stroke-width="1.75"/><circle cx="830.8" cy="335.1" r="2.5" fill="#fff" stroke="#a33b3b" stroke-width="1.75"/><circle cx="852.8" cy="335.1" r="2.5" fill="#fff" stroke="#a33b3b" stroke-width="1.75"/><circle cx="874.8" cy="246.0" r="2.5" fill="#fff" stroke="#a33b3b" stroke-width="1.75"/><circle cx="896.8" cy="382.2" r="2.5" fill="#fff" stroke="#a33b3b" stroke-width="1.75"/><circle cx="918.8" cy="374.9" r="2.5" fill="#fff" stroke="#a33b3b" stroke-width="1.75"/><circle cx="940.8" cy="367.2" r="2.5" fill="#fff" stroke="#a33b3b" stroke-width="1.75"/><circle cx="962.8" cy="376.8" r="2.5" fill="#fff" stroke="#a33b3b" stroke-width="1.75"/><g font-size="10" fill="#222" text-anchor="middle"><text x="390.2" y="492.9">640</text><text x="412.2" y="468.4">710</text><text x="434.2" y="491.6">659</text><text x="456.2" y="457.1">870</text><text x="478.2" y="488.6">701</text><text x="500.2" y="459.8">832</text><text x="522.2" y="476.6">870</text><text x="544.2" y="458.4">851</text><text x="566.2" y="478.6">842</text><text x="579.7" y="456.1">884</text><text x="610.2" y="432.7">1,214</text><text x="632.2" y="494.0">624</text><text x="654.2" y="472.7">650</text><text x="676.2" y="488.7">700</text><text x="698.2" y="489.9">649</text><text x="716.2" y="447.1">1,010</text><text x="742.2" y="489.3">691</text><text x="764.2" y="458.4">851</text><text x="786.2" y="475.2">890</text><text x="808.2" y="458.4">852</text><text x="830.2" y="479.3">832</text><text x="843.7" y="459.7">833</text><text x="874.2" y="431.9">1,225</text><text x="896.2" y="493.9">626</text><text x="918.2" y="472.1">659</text><text x="938.2" y="489.2">692</text><text x="962.2" y="490.1">649</text><text text-anchor="start" x="969.2" y="445">1,091</text><text x="390.8" y="392.5">2,049</text><text x="411.8" y="376.6">2,272</text><text x="451.3" y="340.3">2,784</text><text x="482.3" y="378.7">2,243</text><text x="499.8" y="348.9">2,663</text><text x="543.8" y="344.5">2,724</text><text x="587.6" y="337.1">2,829</text><text x="609.8" y="262.0">3,886</text><text x="633.2" y="396.1">1,998</text><text x="676.8" y="378.8">2,241</text><text x="715.8" y="308.5">3,232</text><text x="746.3" y="381.0">2,211</text><text x="763.8" y="344.5">2,724</text><text x="807.8" y="344.4">2,726</text><text x="851.8" y="348.7">2,665</text><text x="873.8" y="259.6">3,920</text><text x="896.0" y="395.8">2,002</text><text x="939.8" y="380.8">2,213</text><text text-anchor="start" x="967" y="304.3">3,105</text></g></g></svg>
<div style="left:175px;top:609px;width:813px;height:1px;background:#9a9a9a;"></div>
<div style="left:170px;top:642px;width:818px;height:1px;background:#b4b4b4;"></div>
<div style="left:259px;top:609px;width:103px;height:29px;background:#fff;border:1px solid #8e8e8e;border-top:none;"></div>
<span class="t" style="left:265.60px;top:617.84px;font-size:12px;line-height:12px;color:#000;font-weight:bold;letter-spacing:-0.030px;">Worksheet 1</span>
<svg style="left:347px;top:621.3px;" width="9" height="5" viewBox="0 0 9 5"><path d="M0.5 0.3 H8.5 L4.5 4.6 Z" fill="#8c8c8c"/></svg>
<svg style="left:182px;top:616px;" width="18" height="17" viewBox="182 616 18 17"><rect x="183" y="630" width="2" height="2" fill="#969696"/><rect x="186" y="626.4" width="2" height="5.6" fill="#969696"/><rect x="189" y="624" width="2" height="8" fill="#969696"/><rect x="192" y="626" width="2" height="6" fill="#969696"/><rect x="195" y="625" width="2" height="7" fill="#969696"/><path d="M192 618 h3 v2 h2 v3 h-2 v2 h-3 v-2 h-2 v-3 h2 Z" fill="#1bb851"/><path d="M193 619 h1 v2 h2 v1 h-2 v2 h-1 v-2 h-2 v-1 h2 Z" fill="#b9efb2"/></svg>
<svg style="left:207px;top:616.2px;" width="18" height="18" viewBox="207 616.2 18 18"><rect x="208" y="618.2" width="3.9" height="3.9" fill="#999"/><rect x="208" y="623.2" width="3.9" height="3.9" fill="#999"/><rect x="208" y="628.2" width="3.9" height="3.9" fill="#999"/><rect x="213" y="618.2" width="3.9" height="3.9" fill="#999"/><rect x="213" y="623.2" width="3.9" height="3.9" fill="#999"/><rect x="213" y="628.2" width="3.9" height="3.9" fill="#999"/><rect x="218" y="618.2" width="3.9" height="3.9" fill="#999"/><rect x="218" y="623.2" width="3.9" height="3.9" fill="#999"/><rect x="218" y="628.2" width="3.9" height="3.9" fill="#999"/><rect x="212.6" y="617.2" width="10" height="5.4" fill="#f1f1f1"/><rect x="217" y="622.2" width="5.4" height="4.6" fill="#f1f1f1"/><path d="M213.4 626.2 V618.2 H222 M213.4 626.2 H222 V623.2" stroke="#666" stroke-width="0.9" stroke-dasharray="1.6 1.6" fill="none"/><path d="M217.2 618.0 h3 v2 h2 v3 h-2 v2 h-3 v-2 h-2 v-3 h2 Z" fill="#1bb851"/><path d="M218.2 619.0 h1 v2 h2 v1 h-2 v2 h-1 v-2 h-2 v-1 h2 Z" fill="#b9efb2"/></svg>
<svg style="left:232px;top:618px;" width="16" height="14" viewBox="232 618 16 14"><rect x="233" y="619.1" width="14" height="1.8" fill="#999"/><rect x="233" y="622.1700000000001" width="14" height="1.8" fill="#999"/><rect x="233" y="625.24" width="14" height="1.8" fill="#999"/><rect x="233" y="628.3100000000001" width="14" height="1.8" fill="#999"/></svg>
<div style="left:235px;top:278px;width:125px;height:55px;background:#fff;border:1px solid #a5a5a5;"></div>
<span class="t" style="left:244.30px;top:285.69px;font-size:11px;line-height:11px;color:#000;letter-spacing:-0.273px;">Data Labels</span>
<div style="left:303px;top:291px;width:52px;height:1px;background:#9a9a9a;"></div>
<div style="left:246px;top:305.5px;width:13px;height:13px;background:#fff;border:1px solid #333;"></div>
<svg style="left:247px;top:306px;" width="12" height="12" viewBox="0 0 12 12"><path d="M2.6 6 L5 8.8 L9.6 2.8" stroke="#111" stroke-width="1.8" fill="none"/></svg>
<span class="t" style="left:262.60px;top:305.69px;font-size:11px;line-height:11px;color:#000;letter-spacing:-0.280px;">Show Data Labels</span>
<div style="left:172px;top:355.1px;width:2px;height:1px;background:#b2b2b2;"></div>
<div style="left:172px;top:357.1px;width:2px;height:1px;background:#b2b2b2;"></div>
<div style="left:172px;top:359.1px;width:2px;height:1px;background:#b2b2b2;"></div>
<div style="left:172px;top:361.1px;width:2px;height:1px;background:#b2b2b2;"></div>
<div style="left:172px;top:363.1px;width:2px;height:1px;background:#b2b2b2;"></div>
<div style="left:172px;top:365.1px;width:2px;height:1px;background:#b2b2b2;"></div>
<div style="left:172px;top:367.1px;width:2px;height:1px;background:#b2b2b2;"></div>
<div style="left:172px;top:369.1px;width:2px;height:1px;background:#b2b2b2;"></div>
</div></body></html>
